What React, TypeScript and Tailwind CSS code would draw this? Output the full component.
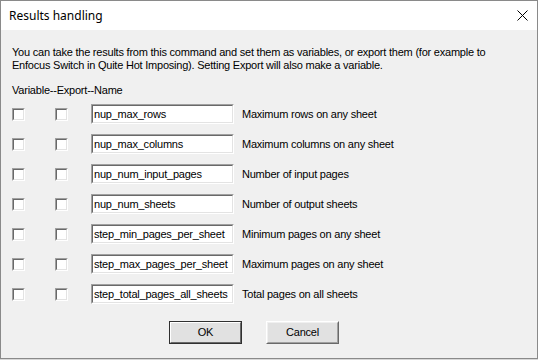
import React from "react";

const rows = [
  { name: "nup_max_rows", label: "Maximum rows on any sheet" },
  { name: "nup_max_columns", label: "Maximum columns on any sheet" },
  { name: "nup_num_input_pages", label: "Number of input pages" },
  { name: "nup_num_sheets", label: "Number of output sheets" },
  { name: "step_min_pages_per_sheet", label: "Minimum pages on any sheet" },
  { name: "step_max_pages_per_sheet", label: "Maximum pages on any sheet" },
  { name: "step_total_pages_all_sheets", label: "Total pages on all sheets" },
];

function Check() {
  return (
    <div className="h-[13px] w-[13px] shrink-0 border border-t-[#a0a0a0] border-l-[#a0a0a0] border-r-white border-b-white">
      <div className="h-full w-full border border-t-[#696969] border-l-[#696969] border-r-[#e3e3e3] border-b-[#e3e3e3] bg-white" />
    </div>
  );
}

function Button({ label, primary }: { label: string; primary?: boolean }) {
  return (
    <div
      className={
        primary
          ? "h-[23px] w-[73px] border border-[#303030] bg-[#e1e1e1]"
          : "h-[23px] w-[73px] border border-t-white border-l-white border-r-[#696969] border-b-[#696969] bg-[#e1e1e1]"
      }
    >
      <div
        className={
          primary
            ? "flex h-full w-full items-center justify-center border border-t-white border-l-white border-r-[#696969] border-b-[#696969]"
            : "flex h-full w-full items-center justify-center border border-t-[#f0f0f0] border-l-[#f0f0f0] border-r-[#a0a0a0] border-b-[#a0a0a0]"
        }
      >
        {label}
      </div>
    </div>
  );
}

export default function App() {
  return (
    <div className="h-[360px] w-[538px] overflow-hidden bg-[#d8d8d8] font-['Liberation_Sans',Arial,sans-serif] text-[11px] leading-[13px] tracking-[-0.22px] text-black">
      <div className="flex h-[359px] w-[538px] flex-col border border-[#8a8a8a] bg-[#f0f0f0]">
        {/* title bar */}
        <div className="flex h-[29px] shrink-0 items-center justify-between bg-white pl-[8px] pr-[9px]">
          <span className="font-['Noto_Sans',sans-serif] text-[12px] leading-[16px] tracking-normal text-black">
            Results handling
          </span>
          <svg width="11" height="11" viewBox="0 0 11 11">
            <path d="M0.5 0.5 L10.5 10.5 M10.5 0.5 L0.5 10.5" stroke="#000" strokeWidth="1" fill="none" />
          </svg>
        </div>

        <div className="flex flex-1 flex-col pl-[11px] pt-[16px]">
          <p>
            You can take the results from this command and set them as variables, or export them (for example to
            <br />
            Enfocus Switch in Quite Hot Imposing). Setting Export will also make a variable.
          </p>
          <p className="mt-[12px]">Variable--Export--Name</p>

          <div className="mt-[7px] flex flex-col gap-[10px]">
            {rows.map((r) => (
              <div key={r.name} className="flex h-[20px] items-center">
                <Check />
                <div className="ml-[30px]">
                  <Check />
                </div>
                <div className="ml-[23px] h-[20px] w-[143px] border border-t-[#a0a0a0] border-l-[#a0a0a0] border-r-white border-b-white">
                  <div className="flex h-full w-full items-center overflow-hidden whitespace-nowrap border border-t-[#696969] border-l-[#696969] border-r-[#e3e3e3] border-b-[#e3e3e3] bg-white pl-[1px]">
                    {r.name}
                  </div>
                </div>
                <span className="ml-[8px]">{r.label}</span>
              </div>
            ))}
          </div>

          <div className="ml-[157px] mt-[17px] flex gap-[24px]">
            <Button label="OK" primary />
            <Button label="Cancel" />
          </div>
        </div>
      </div>
    </div>
  );
}
